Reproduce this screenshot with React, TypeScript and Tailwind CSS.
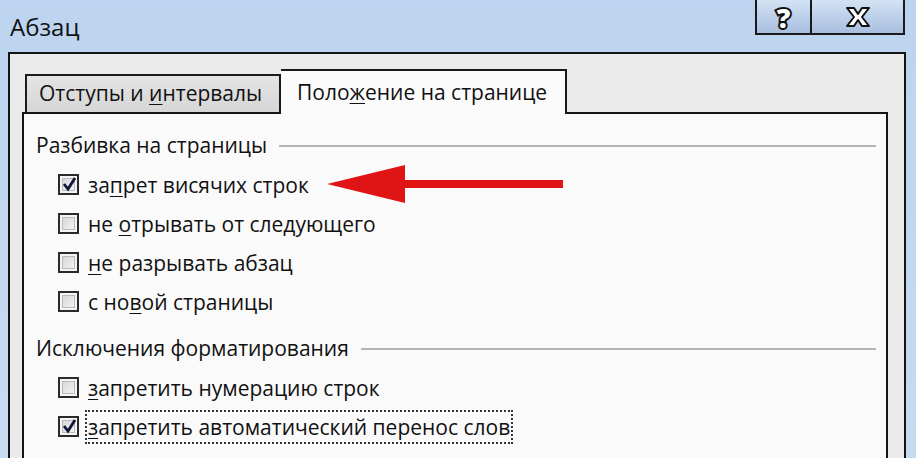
const font = { fontFamily: '"Open Sans", "Noto Sans", "DejaVu Sans", sans-serif' };

function U({ children }: { children: string }) {
  return <span className="underline underline-offset-[3px] decoration-1">{children}</span>;
}

function Box({ checked }: { checked?: boolean }) {
  return (
    <div className="relative flex h-[21px] w-[21px] shrink-0 items-center justify-center border-2 border-[#2a2a2a] bg-[#f4f4f4]">
      <div className="h-[13px] w-[13px] border border-[#b9b9b9] bg-gradient-to-br from-[#d8d8d8] to-[#f2f2f2]" />
      {checked && (
        <svg className="absolute left-[1px] top-[0px]" width="17" height="17" viewBox="0 0 17 17">
          <path d="M3 8 L7 13 L14 2" fill="none" stroke="#10143a" strokeWidth="2.8" />
        </svg>
      )}
    </div>
  );
}

function Row({ checked, children, focus }: { checked?: boolean; children: React.ReactNode; focus?: boolean }) {
  return (
    <div className="flex h-[39px] items-center pl-[22px]">
      <Box checked={checked} />
      <div
        className={
          focus
            ? "ml-[6px] whitespace-nowrap border-2 border-dotted border-[#333] px-[1px] leading-[30px]"
            : "ml-[9px] whitespace-nowrap leading-[30px]"
        }
      >
        {children}
      </div>
    </div>
  );
}

function Heading({ children }: { children: string }) {
  return (
    <div className="flex h-[38px] items-center">
      <span className="whitespace-nowrap">{children}</span>
      <div className="ml-[12px] mr-[10px] h-[2px] flex-1 bg-[#b4b4b4]" />
    </div>
  );
}

export default function App() {
  return (
    <div
      className="relative flex h-[458px] w-[916px] flex-col overflow-hidden bg-gradient-to-b from-[#bcd4ef] to-[#c7dbf1] text-[21px] text-[#111]"
      style={font}
    >
      <div className="flex h-[52px] shrink-0 items-start">
        <div className="pl-[10px] pt-[12px] text-[24px] leading-[30px]">Абзац</div>
        <div className="ml-auto mr-[11px] flex h-[35px]">
          <div className="flex w-[57px] items-center justify-center border-x-2 border-b-2 border-[#1a1a1a] bg-gradient-to-b from-[#d3e3f5] to-[#a9bfdf] pt-[2px] text-[27px] font-extrabold leading-none text-white [-webkit-text-stroke:4px_#111] [paint-order:stroke_fill]">
            ?
          </div>
          <div className="flex w-[93px] items-center justify-center border-r-2 border-b-2 border-[#1a1a1a] bg-gradient-to-b from-[#d3e3f5] to-[#a9bfdf]">
            <svg width="30" height="24" viewBox="0 0 30 24">
              <path d="M4 3 L11 3 L15 9 L19 3 L26 3 L19 12 L26 21 L19 21 L15 15 L11 21 L4 21 L11 12 Z" fill="#fff" stroke="#111" strokeWidth="2" strokeLinejoin="round" />
            </svg>
          </div>
        </div>
      </div>

      <div className="ml-[8px] mr-[10px] flex flex-1 flex-col border-x-2 border-t-2 border-[#141414] bg-[#ebebeb] pl-[12px] pr-[16px] pt-[15px]">
        <div className="relative z-10 flex items-end pl-[3px]">
          <div className="flex h-[38px] w-[256px] items-center whitespace-nowrap border-x-2 border-t-2 border-[#1a1a1a] bg-gradient-to-b from-[#e4e4e4] to-[#d6d6d6] pl-[12px]">
            {"Отступы и\u00a0"}<U>и</U>нтервалы
          </div>
          <div className="-mb-[2px] flex h-[45px] w-[286px] items-center whitespace-nowrap border-r-2 border-t-2 border-[#1a1a1a] bg-[#fbfbfb] pl-[16px]">
            Поло<U>ж</U>ение на странице
          </div>
        </div>
        <div className="flex-1 border-x-2 border-t-2 border-[#141414] bg-[#fafafa] pl-[12px] pt-[13px]">
          <Heading>Разбивка на страницы</Heading>
          <Row checked>
            за<U>п</U>рет висячих строк
          </Row>
          <Row>
            {"не\u00a0"}<U>о</U>трывать от следующего
          </Row>
          <Row>
            <U>н</U>е разрывать абзац
          </Row>
          <Row>
            с но<U>в</U>ой страницы
          </Row>
          <div className="mt-[9px]">
            <Heading>Исключения форматирования</Heading>
          </div>
          <Row>
            <U>з</U>апретить нумерацию строк
          </Row>
          <Row checked focus>
            <U>з</U>апретить автоматический перенос слов
          </Row>
        </div>
      </div>

      <svg className="absolute left-[325px] top-[163px]" width="242" height="44" viewBox="0 0 242 44">
        <polygon points="2,21 80,2 80,40" fill="#e01414" />
        <rect x="78" y="17" width="160" height="8" fill="#e01414" />
      </svg>
    </div>
  );
}
